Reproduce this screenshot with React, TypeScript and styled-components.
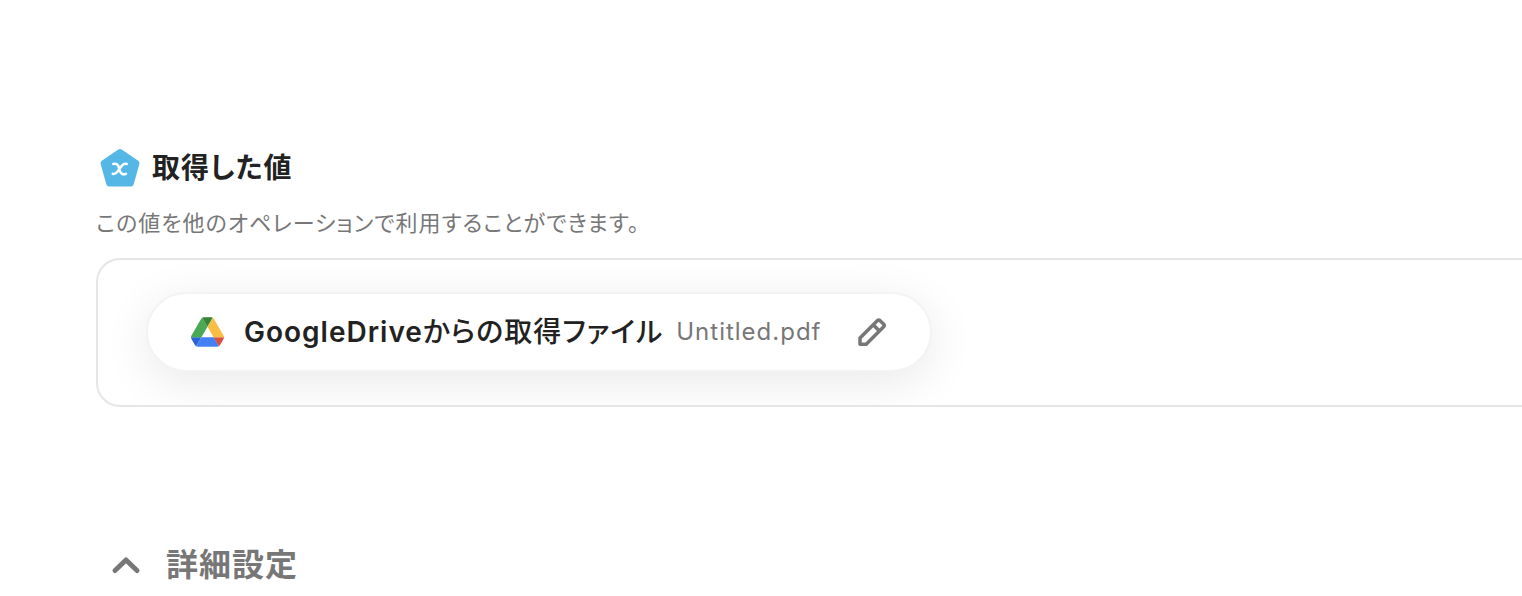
import React from "react";
import styled, { createGlobalStyle } from "styled-components";

const GlobalStyle = createGlobalStyle`
  * { box-sizing: border-box; }
  body {
    margin: 0;
    background: #fff;
    color: #222;
    font-family: Inter, "Noto Sans CJK JP", sans-serif;
    font-feature-settings: "palt";
    letter-spacing: 1px;
    overflow-x: hidden;
  }
`;

const Page = styled.main`
  padding: 144px 0 0 96px;
`;

const TitleRow = styled.header`
  display: flex;
  align-items: center;
  gap: 8px;
  height: 48px;
`;

const Title = styled.h2`
  margin: 0;
  font-size: 28px;
  line-height: 48px;
  font-weight: 600;
`;

const Description = styled.p`
  margin: 13px 0 17px;
  font-size: 22px;
  line-height: 36px;
  color: #777;
`;

const ValuePanel = styled.div`
  display: flex;
  padding: 32px 48px 33px;
  border: 2px solid #e6e6e6;
  border-right: 0;
  border-radius: 24px 0 0 24px;
  overflow: hidden;
`;

const ValueChip = styled.div`
  display: flex;
  align-items: center;
  height: 80px;
  padding: 0 38px 0 43px;
  border: 2px solid #f3f3f3;
  border-radius: 40px;
  background: #fff;
  box-shadow: 0 10px 48px rgba(0, 0, 0, 0.09);
`;

const ValueLabel = styled.div`
  display: flex;
  align-items: center;
  gap: 13px;
  margin: 0 31px 0 20px;
  line-height: 40px;
  white-space: nowrap;
`;

const ValueName = styled.span`
  font-size: 28px;
  font-weight: 500;
`;

const ServiceName = styled.span`
  font-weight: 600;
`;

const FileName = styled.span`
  font-size: 24px;
  color: #777;
`;

const EditButton = styled.button`
  display: flex;
  padding: 0;
  border: 0;
  background: none;
  color: #777;
  cursor: pointer;
`;

const AdvancedToggle = styled.button`
  display: flex;
  align-items: center;
  gap: 24px;
  margin-top: 134px;
  padding: 0 14px;
  border: 0;
  background: none;
  color: #777;
  font: inherit;
  font-size: 32px;
  line-height: 48px;
  font-weight: 600;
  letter-spacing: inherit;
  cursor: pointer;
`;

const VariableIcon = () => (
  <svg width="48" height="48" viewBox="0 0 48 48" aria-hidden="true">
    <path
      d="M24 8 40.500 19.300 34.800 39.500H13.200L7.500 19.300Z"
      fill="#55b7e6"
      stroke="#55b7e6"
      strokeWidth="6"
      strokeLinejoin="round"
    />
    <path
      d="M17.300 20c2.600-.8 4.300-.2 5.300 2.600l1.400 4.600c.9 2.800 3.300 3.800 6 2.600M30.700 20c-2.200-.7-3.900.2-5.500 2.500l-3.400 4.700c-1.500 2.200-3.100 3.200-5.100 2.500"
      fill="none"
      stroke="#fff"
      strokeWidth="2.500"
      strokeLinecap="round"
    />
  </svg>
);

const DriveIcon = () => (
  <svg width="33" height="30" viewBox="0 0 87.300 78" aria-hidden="true">
    <path fill="#2a63d6" d="M6.600 66.850 10.450 73.500c.8 1.400 1.950 2.500 3.300 3.300L27.500 53H0c0 1.550.4 3.100 1.200 4.500Z" />
    <path fill="#4ba854" d="M43.650 25 29.900 1.200c-1.350.8-2.500 1.900-3.300 3.300L1.200 48.500A9 9 0 0 0 0 53h27.500Z" />
    <path fill="#dc5040" d="M73.550 76.800c1.350-.8 2.500-1.900 3.300-3.300l9.250-16c.8-1.400 1.200-2.950 1.200-4.500H59.800l5.850 11.500Z" />
    <path fill="#35823b" d="M43.650 25 57.400 1.200C56.050.4 54.500 0 52.900 0H34.400c-1.600 0-3.150.45-4.500 1.200Z" />
    <path fill="#4380f3" d="M59.800 53H27.500L13.750 76.800c1.350.8 2.900 1.200 4.500 1.200h50.800c1.600 0 3.150-.45 4.500-1.200Z" />
    <path fill="#f6be43" d="m73.400 26.500-12.700-22c-.8-1.400-1.950-2.500-3.300-3.300L43.650 25 59.800 53h27.450c0-1.550-.4-3.100-1.200-4.500Z" />
  </svg>
);

const PencilIcon = () => (
  <svg width="40" height="40" viewBox="0 0 40 40" fill="none" stroke="currentColor" strokeWidth="3.500" strokeLinejoin="round" aria-hidden="true">
    <path d="M8 32.200v-6.200L25.500 8.500q1.200-1.200 2.400 0l3.800 3.800q1.200 1.200 0 2.400L14.200 32.200ZM21.200 12.800l6.200 6.200" />
  </svg>
);

const ChevronUpIcon = () => (
  <svg width="32" height="32" viewBox="0 0 32 32" aria-hidden="true">
    <path d="M5 21.500 16 11l11 10.500" fill="none" stroke="currentColor" strokeWidth="5" strokeLinecap="round" strokeLinejoin="round" />
  </svg>
);

export default function App() {
  return (
    <>
      <GlobalStyle />
      <Page lang="ja">
        <section>
          <TitleRow>
            <VariableIcon />
            <Title>取得した値</Title>
          </TitleRow>
          <Description>この値を他のオペレーションで利用することができます。</Description>
          <ValuePanel>
            <ValueChip>
              <DriveIcon />
              <ValueLabel>
                <ValueName>
                  <ServiceName>GoogleDrive</ServiceName>からの取得ファイル
                </ValueName>
                <FileName>Untitled.pdf</FileName>
              </ValueLabel>
              <EditButton type="button" aria-label="編集">
                <PencilIcon />
              </EditButton>
            </ValueChip>
          </ValuePanel>
        </section>
        <AdvancedToggle type="button" aria-expanded="true">
          <ChevronUpIcon />
          詳細設定
        </AdvancedToggle>
      </Page>
    </>
  );
}
